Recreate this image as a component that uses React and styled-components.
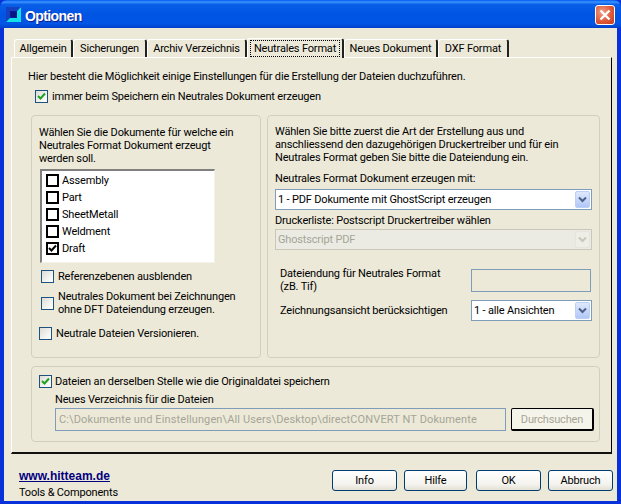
import React from 'react';
import styled, { createGlobalStyle } from 'styled-components';

const GlobalStyle = createGlobalStyle`
  html, body {
    margin: 0;
    padding: 0;
    background: #ece9d8;
  }
  * {
    box-sizing: border-box;
  }
`;

const Window = styled.div`
  width: 621px;
  height: 504px;
  display: flex;
  flex-direction: column;
  background: #0831d9;
  overflow: hidden;
  font-family: Roboto, "Liberation Sans", sans-serif;
  font-size: 11px;
  letter-spacing: -0.17px;
  line-height: 13px;
  color: #000;
`;

const TitleBar = styled.div`
  height: 28px;
  flex: none;
  display: flex;
  align-items: center;
  padding: 1px 6px 0 6px;
  border-radius: 7px 7px 0 0;
  background: linear-gradient(180deg, #0058ee 0%, #3a93ff 7%, #0a5fe8 16%, #0054e3 50%, #0055e5 85%, #0040c8 100%);
`;

const TitleText = styled.span`
  margin: 3px 0 0 4px;
  flex: 1;
  color: #fff;
  font-size: 14px;
  font-weight: bold;
  letter-spacing: -0.6px;
  font-family: "Liberation Sans", Arial, sans-serif;
  text-shadow: 1px 1px 0 #0f1f8f;
`;

const CloseButton = styled.div`
  width: 20px;
  height: 20px;
  display: flex;
  align-items: center;
  justify-content: center;
  border: 1px solid #fff;
  border-radius: 3px;
  background: radial-gradient(circle at 35% 35%, #f0a08a 0%, #de5a3a 55%, #c23a17 100%);
`;

const Body = styled.div`
  flex: 1;
  margin: 0 4px 3px 4px;
  padding: 11px 4px 0 7px;
  background: #ece9d8;
  display: flex;
  flex-direction: column;
`;

const TabRow = styled.div`
  display: flex;
  height: 18px;
  padding-left: 3px;
  position: relative;
  z-index: 1;
`;

const Tab = styled.div`
  width: ${({ $w }) => $w}px;
  height: ${({ $active }) => ($active ? 20 : 18)}px;
  margin-top: ${({ $active }) => ($active ? -1 : 0)}px;
  display: flex;
  align-items: center;
  justify-content: center;
  background: #ece9d8;
  border-top: 1px solid #fff;
  border-left: 1px solid #fff;
  border-right: 2px solid #222;
  border-radius: 3px 3px 0 0;
`;

const FocusLabel = styled.span`
  outline: ${({ $focus }) => ($focus ? '1px dotted #000' : 'none')};
  padding: ${({ $focus }) => ($focus ? '1px 3px' : '0')};
  white-space: nowrap;
`;

const Panel = styled.div`
  width: 601px;
  height: 397px;
  flex: none;
  padding: 12px 11px 0 16px;
  border-top: 1px solid #fff;
  border-left: 1px solid #fff;
  border-right: 1px solid #000;
  border-bottom: 2px solid #111;
  display: flex;
  flex-direction: column;
`;

const Intro = styled.div`
  height: 13px;
  white-space: nowrap;
`;

const CheckLine = styled.div`
  display: flex;
  align-items: center;
  gap: ${({ $gap }) => $gap ?? 4}px;
  margin-left: ${({ $left }) => $left ?? 0}px;
  margin-top: ${({ $top }) => $top ?? 0}px;
  white-space: nowrap;
`;

const Box = styled.span`
  width: 13px;
  height: 13px;
  flex: none;
  display: flex;
  align-items: center;
  justify-content: center;
  border: 1px solid #1c5180;
  background: linear-gradient(135deg, #dcdcd7 0%, #f3f3ef 60%, #ffffff 100%);
`;

const ListBox = styled.div`
  width: 175px;
  height: 94px;
  margin: 4px 0 0 1px;
  padding: 1px 0 0 4px;
  background: #fff;
  border-top: 2px solid #808080;
  border-left: 2px solid #808080;
  border-right: 1px solid #f4f2e8;
  border-bottom: 1px solid #f4f2e8;
`;

const ListRow = styled.div`
  height: 17px;
  display: flex;
  align-items: center;
  gap: 3px;
`;

const ListCheck = styled.span`
  width: 13px;
  height: 13px;
  flex: none;
  display: flex;
  align-items: center;
  justify-content: center;
  border: 2px solid #000;
  background: #fff;
`;

const Columns = styled.div`
  display: flex;
  gap: 6px;
  margin-top: 12px;
  margin-left: 3px;
`;

const Group = styled.div`
  width: ${({ $w }) => $w}px;
  height: ${({ $h }) => $h}px;
  flex: none;
  margin: ${({ $margin }) => $margin ?? 0};
  border: 1px solid #d0d0bf;
  border-radius: 4px;
  padding: ${({ $pad }) => $pad};
`;

const Para = styled.div`
  white-space: nowrap;
`;

const Label = styled.div`
  height: 13px;
  margin-top: ${({ $mt }) => $mt ?? 0}px;
  margin-left: ${({ $ml }) => $ml ?? 0}px;
  white-space: nowrap;
`;

const Select = styled.div`
  width: ${({ $w }) => $w}px;
  height: 21px;
  flex: none;
  margin-top: ${({ $mt }) => $mt ?? 0}px;
  display: flex;
  align-items: center;
  justify-content: space-between;
  padding: 0 1px 0 2px;
  background: ${({ $off }) => ($off ? '#ebebe4' : '#fff')};
  color: ${({ $off }) => ($off ? '#a5a597' : '#000')};
  border: 1px solid ${({ $off }) => ($off ? '#c9c7ba' : '#7f9db9')};
`;

const Arrow = styled.span`
  width: 15px;
  height: 17px;
  flex: none;
  display: flex;
  align-items: center;
  justify-content: center;
  border-radius: 2px;
  border: 1px solid ${({ $off }) => ($off ? '#e6e5dc' : '#bcd0f5')};
  background: ${({ $off }) =>
    $off ? '#eeede6' : 'linear-gradient(180deg, #dfe9fd 0%, #c3d5fb 60%, #b0c7f7 100%)'};
`;

const FieldRow = styled.div`
  width: ${({ $w }) => $w}px;
  display: flex;
  align-items: center;
  justify-content: space-between;
  margin-top: ${({ $mt }) => $mt ?? 0}px;
  margin-left: 5px;
`;

const ReadOnly = styled.div`
  width: 120px;
  height: 23px;
  background: #ece9d8;
  border: 1px solid #7f9db9;
`;

const PathRow = styled.div`
  display: flex;
  gap: 5px;
  margin-top: 2px;
  margin-left: 16px;
`;

const PathInput = styled.div`
  width: 451px;
  height: 23px;
  padding: 0 3px;
  display: flex;
  align-items: center;
  color: #a5a597;
  letter-spacing: 0.12px;
  border: 1px solid #7f9db9;
  white-space: nowrap;
`;

const BrowseButton = styled.div`
  width: 83px;
  height: 23px;
  display: flex;
  align-items: center;
  justify-content: center;
  color: #a5a597;
  background: #f5f4ea;
  border: 1px solid #000;
  border-right-width: 2px;
  border-bottom-width: 2px;
  border-radius: 2px;
`;

const Footer = styled.div`
  flex: 1;
  display: flex;
  justify-content: space-between;
  padding: 16px 0 0 8px;
`;

const Brand = styled.div`
  display: flex;
  flex-direction: column;
  gap: 3px;
`;

const BrandLink = styled.a`
  color: #000080;
  font-family: "Liberation Sans", Arial, sans-serif;
  font-weight: bold;
  font-size: 12px;
  letter-spacing: 0;
  text-decoration: underline;
`;

const Buttons = styled.div`
  display: flex;
  gap: 7px;
`;

const Button = styled.div`
  width: ${({ $w }) => $w}px;
  height: 21px;
  margin-left: ${({ $ml }) => $ml ?? 0}px;
  display: flex;
  align-items: center;
  justify-content: center;
  border: 1px solid #003c74;
  border-radius: 3px;
  background: linear-gradient(180deg, #ffffff 0%, #f4f3ee 70%, #e3e0d4 100%);
`;

const XpTick = () => (
  <svg width="9" height="9" viewBox="0 0 9 9">
    <path d="M1 4 L3.5 6.5 L8 1.5" fill="none" stroke="#21a121" strokeWidth="2" />
  </svg>
);

const BlackTick = () => (
  <svg width="9" height="9" viewBox="0 0 9 9">
    <path d="M1 4 L3.5 6.5 L8 1.5" fill="none" stroke="#000" strokeWidth="2" />
  </svg>
);

const Chevron = ({ color }) => (
  <svg width="9" height="7" viewBox="0 0 9 7">
    <path d="M1 1.5 L4.5 5 L8 1.5" fill="none" stroke={color} strokeWidth="2" />
  </svg>
);

const AppIcon = () => (
  <svg width="15" height="15" viewBox="0 0 15 15">
    <rect x="0" y="0" width="15" height="15" fill="#0a1a9a" />
    <path d="M0 15 L4 11 L4 4 L11 4 L15 0 L0 0 Z" fill="#1540c0" />
    <path d="M0 15 L15 15 L15 0 L11 4 L11 11 L4 11 Z" fill="#10e0e8" />
    <rect x="5" y="5" width="5" height="5" fill="#0b1580" />
  </svg>
);

const CloseIcon = () => (
  <svg width="12" height="12" viewBox="0 0 12 12">
    <path d="M1.5 1.5 L10.5 10.5 M10.5 1.5 L1.5 10.5" stroke="#fff" strokeWidth="2.4" />
  </svg>
);

const tabs = [
  { label: 'Allgemein', w: 59 },
  { label: 'Sicherungen', w: 74 },
  { label: 'Archiv Verzeichnis', w: 100 },
  { label: 'Neutrales Format', w: 97, active: true },
  { label: 'Neues Dokument', w: 94 },
  { label: 'DXF Format', w: 71 },
];

const documents = [
  { label: 'Assembly' },
  { label: 'Part' },
  { label: 'SheetMetall' },
  { label: 'Weldment' },
  { label: 'Draft', checked: true },
];

export default function App() {
  return (
    <Window>
      <GlobalStyle />
      <TitleBar>
        <AppIcon />
        <TitleText>Optionen</TitleText>
        <CloseButton>
          <CloseIcon />
        </CloseButton>
      </TitleBar>
      <Body>
        <TabRow>
          {tabs.map((tab) => (
            <Tab key={tab.label} $w={tab.w} $active={tab.active}>
              <FocusLabel $focus={tab.active}>{tab.label}</FocusLabel>
            </Tab>
          ))}
        </TabRow>
        <Panel>
          <Intro>Hier besteht die Möglichkeit einige Einstellungen für die Erstellung der Dateien duchzuführen.</Intro>
          <CheckLine $left={7} $top={7}>
            <Box>
              <XpTick />
            </Box>
            immer beim Speichern ein Neutrales Dokument erzeugen
          </CheckLine>
          <Columns>
            <Group $w={230} $h={243} $pad="10px 0 0 7px">
              <Para>
                Wählen Sie die Dokumente für welche ein
                <br />
                Neutrales Format Dokument erzeugt
                <br />
                werden soll.
              </Para>
              <ListBox>
                {documents.map((doc) => (
                  <ListRow key={doc.label}>
                    <ListCheck>{doc.checked && <BlackTick />}</ListCheck>
                    {doc.label}
                  </ListRow>
                ))}
              </ListBox>
              <CheckLine $left={2} $top={7}>
                <Box />
                Referenzebenen ausblenden
              </CheckLine>
              <CheckLine $left={2} $top={7}>
                <Box />
                <Para>
                  Neutrales Dokument bei Zeichnungen
                  <br />
                  ohne DFT Dateiendung erzeugen.
                </Para>
              </CheckLine>
              <CheckLine $top={11}>
                <Box />
                Neutrale Dateien Versionieren.
              </CheckLine>
            </Group>
            <Group $w={333} $h={243} $pad="9px 0 0 7px">
              <Para>
                Wählen Sie bitte zuerst die Art der Erstellung aus und
                <br />
                anschliessend den dazugehörigen Druckertreiber und für ein
                <br />
                Neutrales Format geben Sie bitte die Dateiendung ein.
              </Para>
              <Label $mt={8}>Neutrales Format Dokument erzeugen mit:</Label>
              <Select $w={317} $mt={4}>
                1 - PDF Dokumente mit GhostScript erzeugen
                <Arrow>
                  <Chevron color="#4d6185" />
                </Arrow>
              </Select>
              <Label $mt={4}>Druckerliste: Postscript Druckertreiber wählen</Label>
              <Select $w={317} $mt={2} $off>
                Ghostscript PDF
                <Arrow $off>
                  <Chevron color="#c9c7ba" />
                </Arrow>
              </Select>
              <FieldRow $mt={17} $w={311}>
                <Para>
                  Dateiendung für Neutrales Format
                  <br />
                  (zB. Tif)
                </Para>
                <ReadOnly />
              </FieldRow>
              <FieldRow $mt={7} $w={312}>
                Zeichnungsansicht berücksichtigen
                <Select $w={121}>
                  1 - alle Ansichten
                  <Arrow>
                    <Chevron color="#4d6185" />
                  </Arrow>
                </Select>
              </FieldRow>
            </Group>
          </Columns>
          <Group $w={569} $h={76} $pad="8px 0 0 7px" $margin="8px 0 0 3px">
            <CheckLine $gap={3}>
              <Box>
                <XpTick />
              </Box>
              Dateien an derselben Stelle wie die Originaldatei speichern
            </CheckLine>
            <Label $mt={5} $ml={16}>Neues Verzeichnis für die Dateien</Label>
            <PathRow>
              <PathInput>C:\Dokumente und Einstellungen\All Users\Desktop\directCONVERT NT Dokumente</PathInput>
              <BrowseButton>Durchsuchen</BrowseButton>
            </PathRow>
          </Group>
        </Panel>
        <Footer>
          <Brand>
            <BrandLink>www.hitteam.de</BrandLink>
            <span>Tools &amp; Components</span>
          </Brand>
          <Buttons>
            <Button $w={65}>Info</Button>
            <Button $w={63}>Hilfe</Button>
            <Button $w={65} $ml={2}>OK</Button>
            <Button $w={65}>Abbruch</Button>
          </Buttons>
        </Footer>
      </Body>
    </Window>
  );
}
